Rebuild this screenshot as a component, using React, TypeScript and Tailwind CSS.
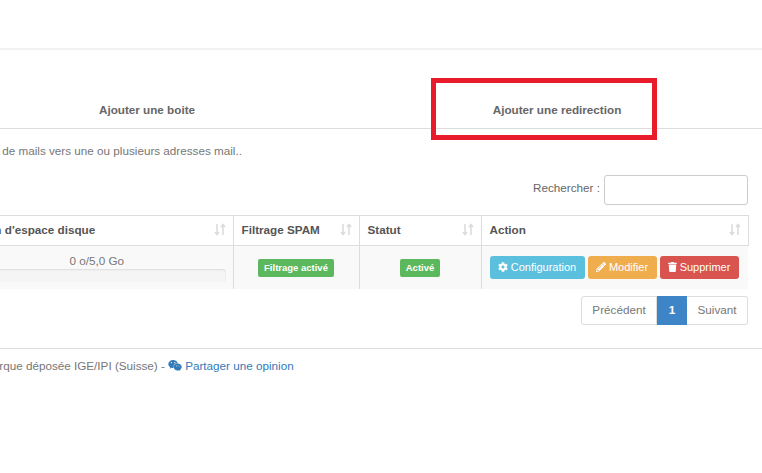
import { FaCog, FaPencilAlt, FaTrash, FaWeixin } from "react-icons/fa";

function SortIcon() {
  return (
    <svg className="w-[12px] h-[13px] text-[#dcdcdc] shrink-0" viewBox="0 0 12 13" fill="none" stroke="currentColor">
      <path d="M3 1v10M1 9l2 2.5L5 9" strokeWidth="1.6" />
      <path d="M9 12V2M7 4l2-2.5L11 4" strokeWidth="1.6" />
    </svg>
  );
}

function Th({ label, className }: { label: string; className: string }) {
  return (
    <th className={`h-[30px] pr-[7px] pb-[2px] border-t border-b border-r border-[#dddddd] text-left font-bold text-[#555555] ${className}`}>
      <div className="flex items-center justify-between whitespace-nowrap">
        <span>{label}</span>
        <SortIcon />
      </div>
    </th>
  );
}

function Badge({ label }: { label: string }) {
  return (
    <span className="inline-block h-[18px] leading-[18px] px-[6px] rounded-[2px] bg-[#5cb85c] text-white text-[9.5px] font-bold">
      {label}
    </span>
  );
}

export default function App() {
  return (
    <div className="w-[762px] h-[473px] overflow-hidden bg-white text-[11.7px] text-[#777777] font-['Liberation_Sans',Arial,sans-serif] relative">
      <div className="h-[50px] border-b-2 border-[#f2f2f2]" />

      {/* tabs */}
      <div className="flex h-[79px] border-b border-[#dddddd] ml-[-58px] w-[820px]">
        <div className="w-[410px] pt-[51px] text-center font-bold text-[#666666]">Ajouter une boite</div>
        <div className="w-[410px] pt-[51px] text-center font-bold text-[#666666]">Ajouter une redirection</div>
      </div>

      <p className="mt-[14px] ml-[-166px] leading-[15px] whitespace-nowrap text-[#777777]">
        Cette option permet de rediriger de mails vers une ou plusieurs adresses mail..
      </p>

      <div className="flex items-start justify-end mt-[17px] pr-[14px] h-[30px]">
        <span className="mr-1 mt-[4px] text-[#666666]">Rechercher :</span>
        <input className="w-[144px] h-[30px] border border-[#cccccc] rounded-[3px] bg-white" />
      </div>

      <table className="mt-[10px] ml-[-65px] w-[813px] table-fixed border-collapse">
        <thead>
          <tr>
            <Th label="Utilisation d'espace disque" className="w-[298px] pl-[10px]" />
            <Th label="Filtrage SPAM" className="w-[126px] pl-2" />
            <Th label="Statut" className="w-[122px] pl-2" />
            <Th label="Action" className="w-[267px] pl-2" />
          </tr>
        </thead>
        <tbody>
          <tr className="h-[43px] bg-[#f9f9f9]">
            <td className="pl-[33px] pr-[7px] border-r border-[#dddddd] text-center align-top pt-[7px]">
              <div className="leading-[15px]">0 o/5,0 Go</div>
              <div className="h-[13px] mt-[1px] rounded-[3px] bg-[#f5f5f5] shadow-[inset_0_1px_2px_rgba(0,0,0,0.1)]" />
            </td>
            <td className="border-r border-[#dddddd] text-center">
              <Badge label="Filtrage activé" />
            </td>
            <td className="border-r border-[#dddddd] text-center">
              <Badge label="Activé" />
            </td>
            <td className="pl-2">
              <div className="flex gap-[3px] text-white text-[11px]">
                <span className="w-[95px] h-[23px] rounded-[3px] bg-[#5bc0de] flex items-center justify-center gap-[3px]">
                  <FaCog className="w-[10px] h-[10px]" />
                  Configuration
                </span>
                <span className="w-[69px] h-[23px] rounded-[3px] bg-[#f0ad4e] flex items-center justify-center gap-[3px]">
                  <FaPencilAlt className="w-[10px] h-[10px]" />
                  Modifier
                </span>
                <span className="w-[79px] h-[23px] rounded-[3px] bg-[#d9534f] flex items-center justify-center gap-[3px]">
                  <FaTrash className="w-[9px] h-[10px]" />
                  Supprimer
                </span>
              </div>
            </td>
          </tr>
        </tbody>
      </table>

      <div className="flex justify-end mt-[7px] pr-[14px]">
        <div className="flex h-[29px] leading-[26px] text-center">
          <span className="w-[76px] border border-[#dddddd] rounded-l-[3px]">Précédent</span>
          <span className="w-[30px] bg-[#3d85c6] text-white leading-[28px] font-bold">1</span>
          <span className="w-[61px] border border-[#dddddd] border-l-0 rounded-r-[3px]">Suivant</span>
        </div>
      </div>

      <div className="mt-[23px] border-t border-[#dddddd] pt-[9px] leading-[15px] flex items-center whitespace-nowrap">
        <span className="ml-[-17px]">Marque déposée IGE/IPI (Suisse) -&nbsp;</span>
        <FaWeixin className="w-[14px] h-[13px] text-[#337ab7] mr-[3px]" />
        <span className="text-[#337ab7]">Partager une opinion</span>
      </div>

      {/* highlight box drawn on the screenshot */}
      <div className="absolute left-[431px] top-[78px] w-[226px] h-[62px] border-[5px] border-[#e81c2b]" />
    </div>
  );
}
